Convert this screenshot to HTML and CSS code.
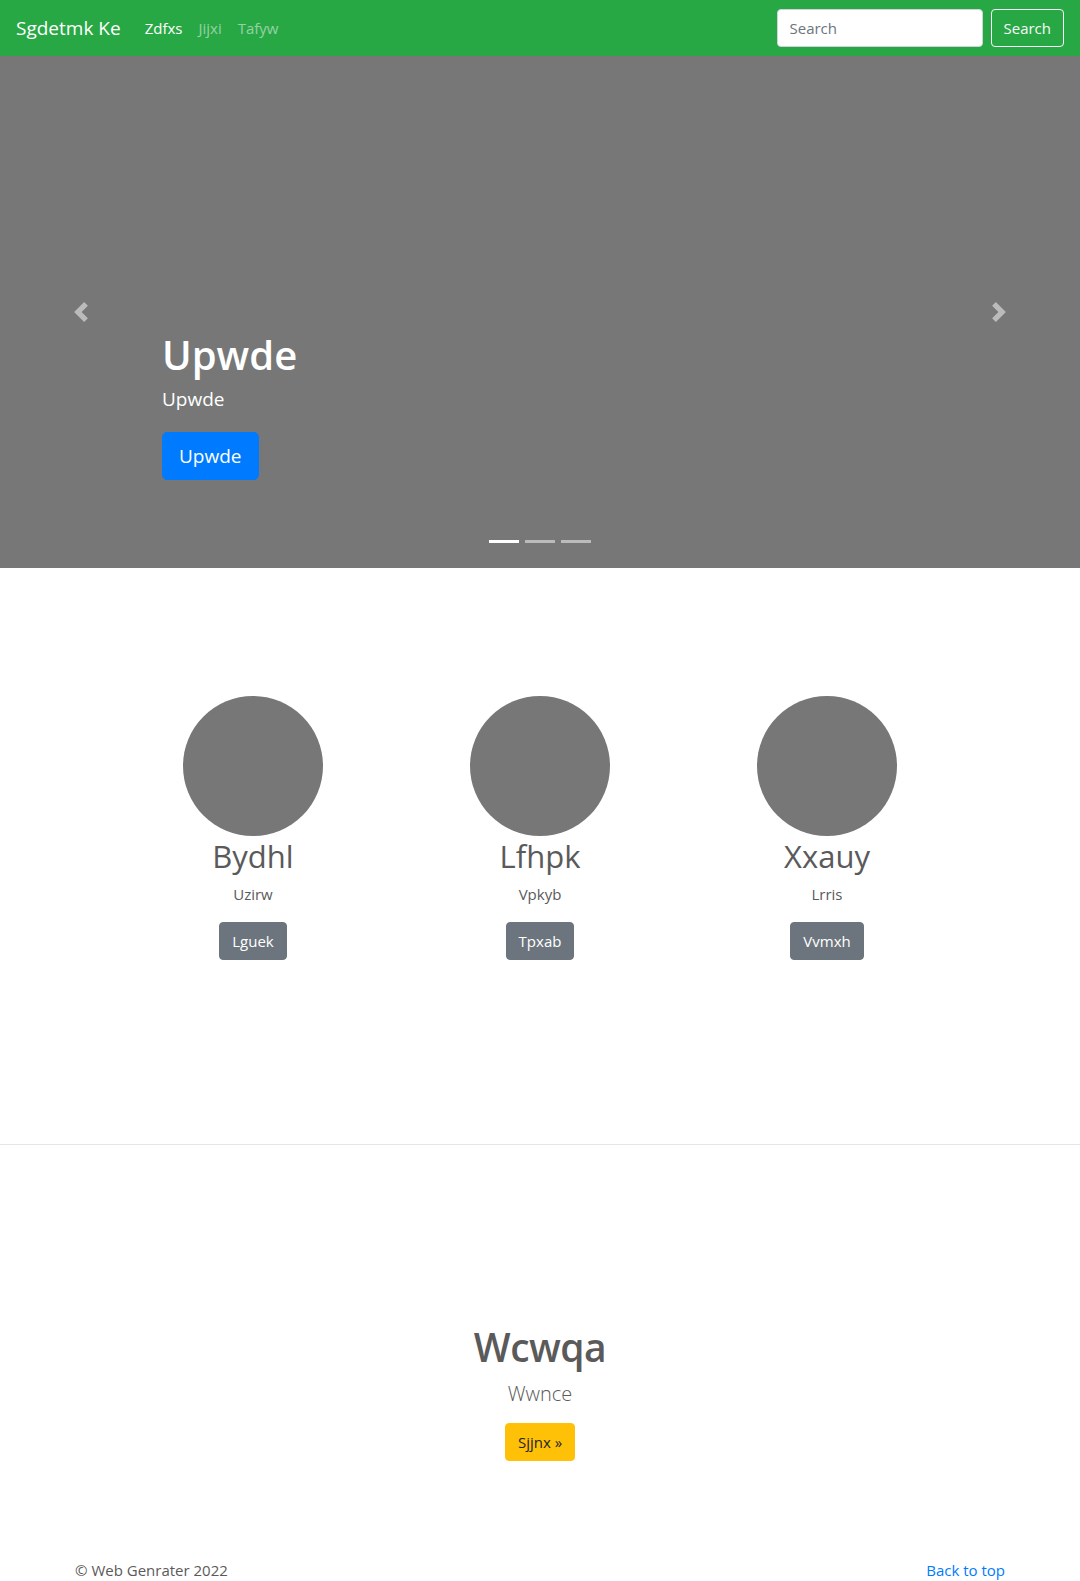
FILE: index.html
```html
<!DOCTYPE html>
<html lang="en">
<head>
<meta charset="utf-8">
<title>Carousel</title>
<link rel="stylesheet" href="styles.css">
</head>
<body>
<nav class="navbar">
  <a class="brand" href="#">Sgdetmk Ke</a>
  <ul class="nav">
    <li><a class="nav-link active" href="#">Zdfxs</a></li>
    <li><a class="nav-link" href="#">Jijxi</a></li>
    <li><a class="nav-link" href="#">Tafyw</a></li>
  </ul>
  <form class="search">
    <input class="search-input" type="text" placeholder="Search">
    <button class="btn btn-outline-light" type="button">Search</button>
  </form>
</nav>

<div class="carousel">
  <a class="control control-prev" href="#">
    <svg width="20" height="20" viewBox="0 0 8 8"><path fill="#fff" d="M5.25 0l-4 4 4 4 1.5-1.5L4.25 4l2.5-2.5L5.25 0z"/></svg>
  </a>
  <div class="caption">
    <h1 class="caption-title">Upwde</h1>
    <p class="caption-text">Upwde</p>
    <p class="caption-action"><a class="btn btn-lg btn-primary" href="#">Upwde</a></p>
  </div>
  <a class="control control-next" href="#">
    <svg width="20" height="20" viewBox="0 0 8 8"><path fill="#fff" d="M2.75 0l-1.5 1.5L3.75 4l-2.5 2.5L2.75 8l4-4-4-4z"/></svg>
  </a>
  <ol class="indicators">
    <li class="active"></li>
    <li></li>
    <li></li>
  </ol>
</div>

<div class="marketing">
  <div class="col">
    <div class="circle"></div>
    <h2 class="col-title">Bydhl</h2>
    <p class="col-text">Uzirw</p>
    <a class="btn btn-secondary" href="#">Lguek</a>
  </div>
  <div class="col">
    <div class="circle"></div>
    <h2 class="col-title">Lfhpk</h2>
    <p class="col-text">Vpkyb</p>
    <a class="btn btn-secondary" href="#">Tpxab</a>
  </div>
  <div class="col">
    <div class="circle"></div>
    <h2 class="col-title">Xxauy</h2>
    <p class="col-text">Lrris</p>
    <a class="btn btn-secondary" href="#">Vvmxh</a>
  </div>
</div>

<hr class="divider">

<div class="feature">
  <h2 class="feature-title">Wcwqa</h2>
  <p class="lead">Wwnce</p>
  <a class="btn btn-warning" href="#">Sjjnx &raquo;</a>
</div>

<footer class="footer">
  <p class="copy">&copy; Web Genrater 2022</p>
  <a class="back" href="#">Back to top</a>
</footer>
</body>
</html>
```

FILE: styles.css
```css
* { box-sizing: border-box; }
html, body { margin: 0; padding: 0; }
body {
  font-family: "Open Sans", "Noto Sans", sans-serif;
  font-size: 16px;
  line-height: 1.5;
  color: #5a5a5a;
  background: #fff;
}
a { text-decoration: none; }

.navbar {
  height: 56px;
  background: #28a745;
  display: flex;
  align-items: center;
  padding: 0 16px;
}
.brand {
  color: #fff;
  font-size: 19px;
  margin-right: 16px;
  line-height: 30px;
}
.nav {
  display: flex;
  list-style: none;
  margin: 0;
  padding: 0;
  flex: 1;
}
.nav-link {
  display: block;
  padding: 8px;
  color: rgba(255,255,255,.5);
  font-size: 15px;
}
.nav-link.active { color: #fff; }
.search { display: flex; align-items: center; }
.search-input {
  width: 206px;
  height: 38px;
  border: 1px solid #ced4da;
  border-radius: 4px;
  padding: 6px 12px;
  font-family: inherit;
  font-size: 15px;
  color: #495057;
  margin-right: 8px;
}
.search-input::placeholder { color: #6c757d; }

.btn {
  display: inline-block;
  font-family: inherit;
  font-size: 15px;
  line-height: 24px;
  padding: 6px 12px;
  border: 1px solid transparent;
  border-radius: 4px;
  color: #fff;
  cursor: pointer;
}
.btn-outline-light {
  background: transparent;
  border-color: #f8f9fa;
  color: #f8f9fa;
}
.btn-lg {
  font-size: 19px;
  line-height: 28px;
  padding: 9px 16px;
  border-radius: 5px;
}
.btn-primary { background: #007bff; border-color: #007bff; }
.btn-secondary { background: #6c757d; border-color: #6c757d; }
.btn-warning { background: #ffc107; border-color: #ffc107; color: #212529; }

.carousel {
  position: relative;
  height: 512px;
  background: #777;
}
.control {
  position: absolute;
  top: 0;
  bottom: 0;
  width: 15%;
  display: flex;
  align-items: center;
  justify-content: center;
  opacity: .5;
}
.control-prev { left: 0; }
.control-next { right: 0; }
.caption {
  position: absolute;
  left: 15%;
  right: 15%;
  bottom: 48px;
  padding: 20px 0;
  color: #fff;
}
.caption-title {
  font-size: 40px;
  font-weight: 600;
  line-height: 48px;
  margin: 0 0 6px;
}
.caption-text {
  font-size: 19px;
  margin: 0 0 19px;
}
.caption-action { margin: 0 0 20px; }
.indicators {
  position: absolute;
  left: 0;
  right: 0;
  bottom: 15px;
  margin: 0;
  padding: 0;
  list-style: none;
  display: flex;
  justify-content: center;
}
.indicators li {
  width: 30px;
  height: 3px;
  margin: 10px 3px;
  background: #fff;
  opacity: .5;
}
.indicators li.active { opacity: 1; }

.marketing {
  width: 861px;
  margin: 0 auto;
  padding-top: 128px;
  display: grid;
  grid-template-columns: repeat(3, 1fr);
}
.col {
  text-align: center;
}
.circle {
  width: 140px;
  height: 140px;
  border-radius: 50%;
  background: #777;
  margin: 0 auto;
}
.col-title {
  font-size: 31px;
  font-weight: 400;
  line-height: 38px;
  margin: 1px 0 8px;
}
.col-text {
  font-size: 15px;
  margin: 0 0 16px;
}

.divider {
  margin: 184px 0 0;
  border: 0;
  border-top: 1px solid rgba(0,0,0,.1);
}

.feature {
  text-align: center;
  padding-top: 177px;
}
.feature-title {
  font-size: 39px;
  font-weight: 600;
  line-height: 50px;
  margin: 0 0 7px;
  letter-spacing: -0.5px;
}
.lead {
  font-size: 20px;
  font-weight: 300;
  line-height: 30px;
  margin: 0 0 14px;
}

.footer {
  width: 960px;
  margin: 0 auto;
  padding: 98px 15px 0;
  display: flex;
  justify-content: space-between;
  font-size: 15px;
}
.copy { margin: 0; }
.back { color: #007bff; }
```
